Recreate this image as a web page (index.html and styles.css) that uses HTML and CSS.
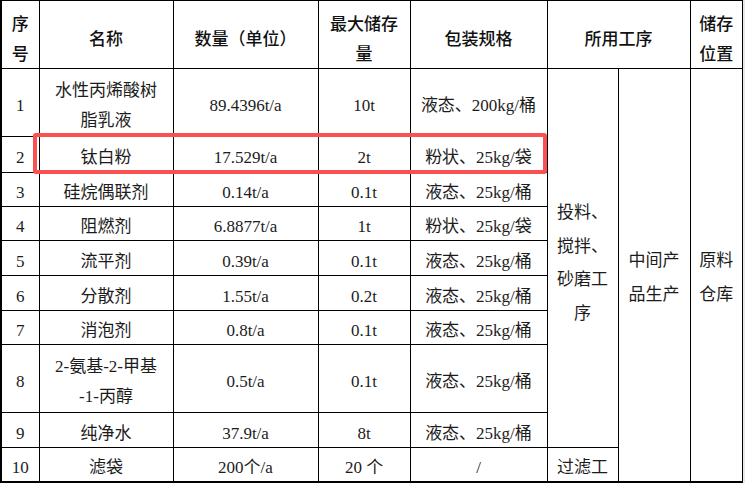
FILE: index.html
```html
<!DOCTYPE html>
<html lang="zh-CN">
<head>
<meta charset="utf-8">
<title>原料表</title>
<link rel="stylesheet" href="styles.css">
</head>
<body>
<div class="sheet">
  <table class="grid">
    <colgroup>
      <col class="c-no"><col class="c-name"><col class="c-qty"><col class="c-max"><col class="c-pack"><col class="c-proc"><col class="c-use"><col class="c-loc">
    </colgroup>
    <thead>
      <tr class="r-head">
        <th class="two">序<br>号</th>
        <th>名称</th>
        <th>数量（单位）</th>
        <th class="two">最大储存<br>量</th>
        <th>包装规格</th>
        <th colspan="2">所用工序</th>
        <th class="two">储存<br>位置</th>
      </tr>
    </thead>
    <tbody>
      <tr class="r-2">
        <td>1</td>
        <td class="two">水性丙烯酸树<br>脂乳液</td>
        <td>89.4396t/a</td>
        <td>10t</td>
        <td>液态、200kg/桶</td>
        <td rowspan="9" class="proc">投料、<br>搅拌、<br>砂磨工<br>序</td>
        <td rowspan="10" class="use">中间产<br>品生产</td>
        <td rowspan="10" class="use">原料<br>仓库</td>
      </tr>
      <tr class="r-b"><td>2</td><td>钛白粉</td><td>17.529t/a</td><td>2t</td><td>粉状、25kg/袋</td></tr>
      <tr class="r-1"><td>3</td><td>硅烷偶联剂</td><td>0.14t/a</td><td>0.1t</td><td>液态、25kg/桶</td></tr>
      <tr class="r-1"><td>4</td><td>阻燃剂</td><td>6.8877t/a</td><td>1t</td><td>粉状、25kg/袋</td></tr>
      <tr class="r-1b"><td>5</td><td>流平剂</td><td>0.39t/a</td><td>0.1t</td><td>液态、25kg/桶</td></tr>
      <tr class="r-1b"><td>6</td><td>分散剂</td><td>1.55t/a</td><td>0.2t</td><td>液态、25kg/桶</td></tr>
      <tr class="r-1"><td>7</td><td>消泡剂</td><td>0.8t/a</td><td>0.1t</td><td>液态、25kg/桶</td></tr>
      <tr class="r-2"><td>8</td><td class="two">2-氨基-2-甲基<br>-1-丙醇</td><td>0.5t/a</td><td>0.1t</td><td>液态、25kg/桶</td></tr>
      <tr class="r-1b"><td>9</td><td>纯净水</td><td>37.9t/a</td><td>8t</td><td>液态、25kg/桶</td></tr>
      <tr class="r-1"><td>10</td><td>滤袋</td><td>200个/a</td><td>20 个</td><td>/</td><td>过滤工</td></tr>
    </tbody>
  </table>
  <div class="mark"></div>
</div>
</body>
</html>
```

FILE: styles.css
```css
html, body {
  margin: 0;
  padding: 0;
  background: #e9e9e9;
}

.sheet {
  position: relative;
  width: 743px;
  height: 483px;
  overflow: hidden;
}

.grid {
  border-collapse: collapse;
  table-layout: fixed;
  width: 743px;
  background: #fff;
  border-left: 2px solid #000;
  border-right: 2px solid #000;
  border-top: 1px solid #000;
  border-bottom: 2px solid #000;
  font-family: "Liberation Serif", "Noto Sans CJK SC", serif;
  font-size: 17px;
  color: #1c1c1c;
}

.c-no { width: 38px; }
.c-name { width: 134px; }
.c-qty { width: 145px; }
.c-max { width: 92px; }
.c-pack { width: 137px; }
.c-proc { width: 71px; }
.c-use { width: 72px; }
.c-loc { width: 53px; }

.grid th,
.grid td {
  border: 1px solid #000;
  padding: 7px 2px 0;
  text-align: center;
  vertical-align: middle;
  line-height: 26px;
  white-space: nowrap;
  overflow: hidden;
}

.grid th {
  font-family: "Noto Sans CJK SC", sans-serif;
  font-weight: 500;
  color: #111;
}

.grid th.two,
.grid td.two {
  line-height: 30px;
}

.grid td.proc {
  padding-top: 10px;
  line-height: 33.5px;
}

.grid td.use {
  padding-top: 6px;
  line-height: 34px;
}

.r-head { height: 68px; }
.r-2 { height: 68px; }
.r-b { height: 36px; }
.r-1 { height: 34px; }
.r-1b { height: 35px; }

.mark {
  position: absolute;
  left: 33px;
  top: 133px;
  width: 506px;
  height: 33px;
  border: 4px solid #fa5050;
  border-radius: 3px;
}
```
